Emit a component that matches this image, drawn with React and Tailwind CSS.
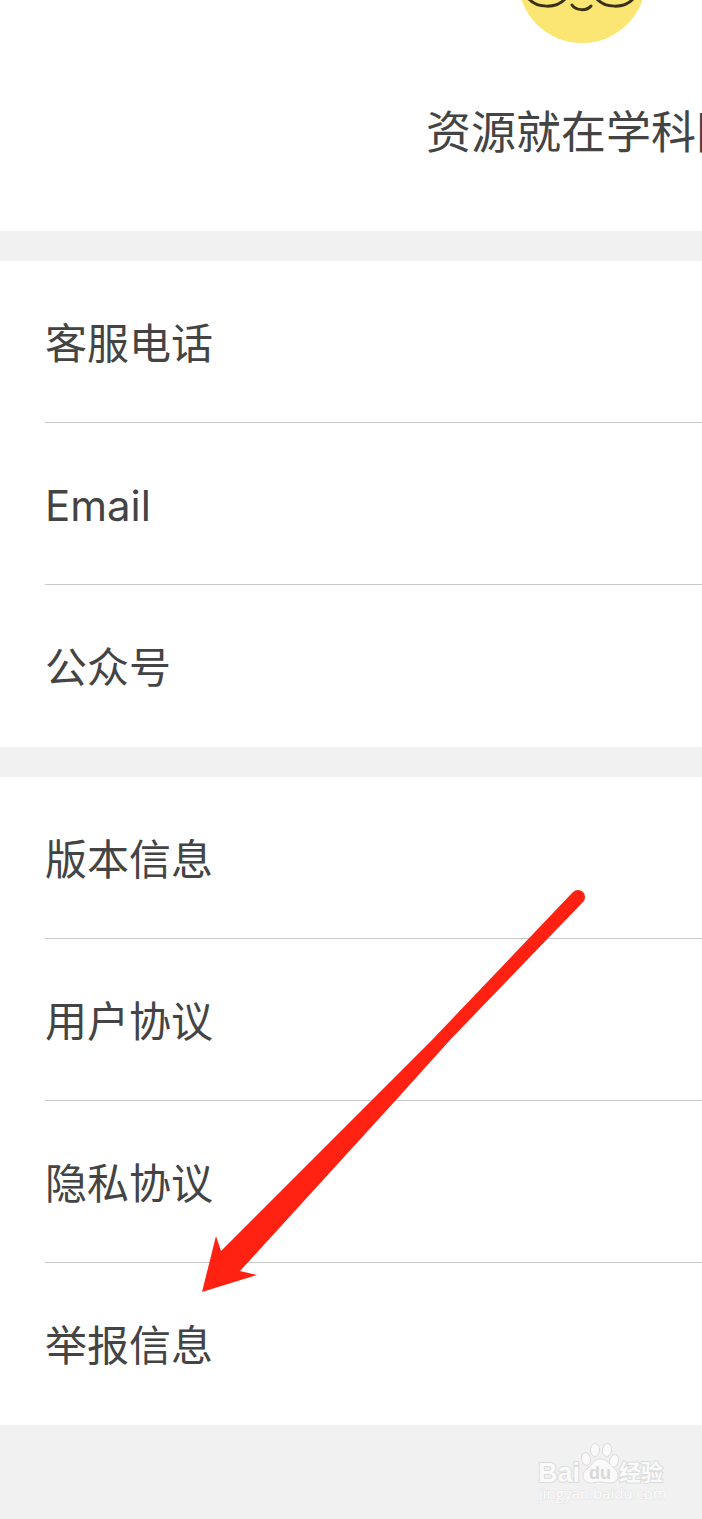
const contactRows = ['客服电话', 'Email', '公众号'];

const aboutRows = [
  { label: '版本信息', href: '#version' },
  { label: '用户协议', href: '#terms' },
  { label: '隐私协议', href: '#privacy' },
  { label: '举报信息', href: '#report' },
];

function Mascot() {
  return (
    <svg className="w-32 h-11 overflow-visible" viewBox="0 0 128 44" fill="none" aria-hidden="true">
      <circle cx="62" cy="-21" r="64" fill="#fbe573" />
      <g stroke="#3a3018" strokeWidth="3" strokeLinecap="round">
        <path d="M9 -1C17 8 36 9 45 -1" />
        <path d="M77 -1C85 8 104 9 113 -1" />
        <path d="M52 5C56 11 67 11 71 6" />
      </g>
    </svg>
  );
}

function Arrow() {
  return (
    <svg
      className="absolute left-[200px] top-[111px] w-[388px] h-[408px] pointer-events-none"
      viewBox="0 0 388 408"
      aria-hidden="true"
    >
      <path
        d="M2 404L16 348L21 363L172 212L232 152L373 4A7 7 0 0 1 383 14L250 152L196 212L40 383L57 387Z"
        fill="#ff2213"
      />
    </svg>
  );
}

function Watermark() {
  return (
    <svg className="w-32 h-16" viewBox="0 0 128 64" role="img" aria-label="Baidu 经验">
      <g
        fill="#fafafa"
        stroke="#dcdcdc"
        strokeWidth="2"
        paintOrder="stroke"
        fontWeight="bold"
        fontFamily="'Liberation Sans', 'Noto Sans CJK SC', sans-serif"
      >
        <text x="0" y="41" fontSize="27">Bai</text>
        <text x="81" y="39" fontSize="22">经验</text>
      </g>
      <g fill="#fafafa" stroke="#dcdcdc" strokeWidth="1">
        <ellipse cx="48" cy="18" rx="4.5" ry="6.5" transform="rotate(-12 48 18)" />
        <ellipse cx="57" cy="9" rx="4.5" ry="6.5" />
        <ellipse cx="69" cy="9" rx="4.5" ry="6.5" transform="rotate(8 69 9)" />
        <ellipse cx="76" cy="20" rx="4.5" ry="6.5" transform="rotate(14 76 20)" />
        <path d="M62 18C56 18 54 24 50 27C44 31 42 40 52 42C56 42 58 41 62 41C66 41 69 42 73 42C82 41 82 32 76 27C71 23 69 18 62 18Z" />
      </g>
      <text x="51" y="38" fontSize="18" fontWeight="bold" fill="#d8d8d8" fontFamily="'Liberation Sans', sans-serif">
        du
      </text>
      <text
        x="1"
        y="58"
        fontSize="15"
        fill="#fcfcfc"
        stroke="#e2e2e2"
        strokeWidth="1"
        paintOrder="stroke"
        fontFamily="'Open Sans', sans-serif"
      >
        jingyan.baidu.com
      </text>
    </svg>
  );
}

export default function App() {
  return (
    <div className="min-h-screen bg-[#f1f1f1] font-['Inter','Noto_Sans_CJK_SC',sans-serif] text-[#444444]">
      {/* Header */}
      <header className="bg-white overflow-hidden pb-[66px]">
        <div className="ml-[426px] w-max flex flex-col items-center gap-[57px]">
          <Mascot />
          <h1 className="text-[45px] leading-[64px] whitespace-nowrap">资源就在学科网</h1>
        </div>
      </header>

      {/* Contact */}
      <ul className="mt-[30px] pl-[45px] bg-white">
        {contactRows.map((label) => (
          <li
            key={label}
            className="h-[162px] pt-1 flex items-center border-b border-[#c8c8c8] last:border-transparent text-[42px] leading-[64px]"
          >
            {label}
          </li>
        ))}
      </ul>

      {/* About */}
      <nav className="relative mt-[30px] bg-white">
        <ul className="pl-[45px]">
          {aboutRows.map(({ label, href }) => (
            <li key={href} className="border-b border-[#c8c8c8] last:border-transparent">
              <a href={href} className="h-[161px] pt-1 flex items-center text-[42px] leading-[64px]">
                {label}
              </a>
            </li>
          ))}
        </ul>
        <Arrow />
      </nav>

      <footer className="flex justify-end pt-4 pb-3 pr-9">
        <Watermark />
      </footer>
    </div>
  );
}
